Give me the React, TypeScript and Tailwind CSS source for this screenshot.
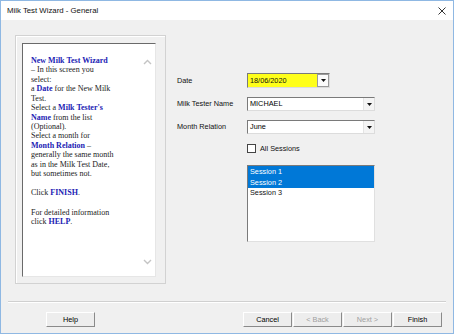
import React from "react";

const B = ({ children }: { children: React.ReactNode }) => (
  <span className="font-bold text-[#1c1cb4]">{children}</span>
);

function Chevron({ up }: { up?: boolean }) {
  return (
    <svg width="9" height="6" viewBox="0 0 9 6">
      <path
        d={up ? "M1 5 L4.5 1.5 L8 5" : "M1 1 L4.5 4.5 L8 1"}
        fill="none"
        stroke="#c4c4c4"
        strokeWidth="1.4"
      />
    </svg>
  );
}

function Tri() {
  return (
    <svg width="5" height="3" viewBox="0 0 5 3">
      <path d="M0 0 L5 0 L2.5 3 Z" fill="#111" />
    </svg>
  );
}

function Combo({ value }: { value: string }) {
  return (
    <div className="w-[128px] h-[14px] flex bg-white border border-t-[#7a7a7a] border-l-[#7a7a7a] border-r-[#dcdcdc] border-b-[#dcdcdc]">
      <div className="flex-1 flex items-center pl-[2px] text-[7.3px] text-black leading-none">{value}</div>
      <div className="w-[11px] h-full flex items-center justify-center bg-[#f4f4f4] border-l border-[#e4e4e4]">
        <Tri />
      </div>
    </div>
  );
}

function Btn({ label, disabled }: { label: string; disabled?: boolean }) {
  return (
    <div
      className={`w-[49px] h-[15px] flex items-center justify-center bg-[#ededed] border border-t-white border-l-white border-r-[#8a8a8a] border-b-[#8a8a8a] text-[7.3px] leading-none ${
        disabled ? "text-[#a0a0a0]" : "text-black"
      }`}
    >
      {label}
    </div>
  );
}

export default function App() {
  const lines: React.ReactNode[] = [
    <B>New Milk Test Wizard</B>,
    <>– In this screen you</>,
    <>select:</>,
    <>a <B>Date</B> for the New Milk</>,
    <>Test.</>,
    <>Select a <B>Milk Tester's</B></>,
    <><B>Name</B> from the list</>,
    <>(Optional).</>,
    <>Select a month for</>,
    <><B>Month Relation</B> –</>,
    <>generally the same month</>,
    <>as in the Milk Test Date,</>,
    <>but sometimes not.</>,
  ];
  return (
    <div
      className="w-[454px] h-[334px] flex flex-col border border-[#8fb8e3] bg-[#f0f0f0] overflow-hidden"
      style={{ fontFamily: '"Liberation Sans", Arial, sans-serif' }}
    >
      {/* Title bar */}
      <div className="h-[19px] bg-white flex items-center justify-between pl-[6px] pr-[6px] shrink-0">
        <span className="text-[7.8px] text-[#111] leading-none">Milk Test Wizard - General</span>
        <svg width="8" height="8" viewBox="0 0 8 8" className="mr-[1px]">
          <path d="M0.5 0.5 L7.5 7.5 M7.5 0.5 L0.5 7.5" stroke="#333" strokeWidth="1" />
        </svg>
      </div>

      {/* Body */}
      <div className="flex-1 flex flex-col">
        <div className="flex pl-[14px] pt-[15px]">
          {/* Left help panel */}
          <div className="w-[151px] h-[249px] border border-[#d2d2d2] shadow-[inset_1px_1px_0_#ffffff] pl-[6px] pr-[9px] pt-[7px] pb-[6px]">
            <div className="w-full h-full bg-white border border-t-[#6a6a6a] border-l-[#6a6a6a] border-r-[#e6e6e6] border-b-[#e6e6e6] flex">
              <div
                className="flex-1 pl-[8px] pt-[12px] text-[8px] leading-[9.42px] text-[#222] whitespace-nowrap"
                style={{ fontFamily: '"Liberation Serif", "Times New Roman", serif' }}
              >
                {lines.map((l, i) => (
                  <div key={i}>{l}</div>
                ))}
                <div className="h-[10px]" />
                <div>
                  Click <B>FINISH</B>.
                </div>
                <div className="h-[10px]" />
                <div>For detailed information</div>
                <div>
                  click <B>HELP</B>.
                </div>
              </div>
              <div className="w-[13px] flex flex-col items-center justify-between pt-[15px] pb-[11px] pr-[2px]">
                <Chevron up />
                <Chevron />
              </div>
            </div>
          </div>

          {/* Right form */}
          <div className="flex flex-col pl-[11px] pt-[38px] text-[7.3px] text-[#111]">
            <div className="flex items-center h-[15px]">
              <div className="w-[70px] leading-none">Date</div>
              <div className="w-[83px] h-[15px] flex border border-t-[#7a7a7a] border-l-[#7a7a7a] border-r-[#dcdcdc] border-b-[#dcdcdc] bg-[#ffff1a]">
                <div className="flex-1 flex items-center pl-[2px] leading-none">18/06/2020</div>
                <div className="w-[12px] h-full flex items-center justify-center bg-[#fbfbfb] border border-[#9a9a9a]">
                  <Tri />
                </div>
              </div>
            </div>
            <div className="flex items-center h-[14px] mt-[9px]">
              <div className="w-[70px] leading-none">Milk Tester Name</div>
              <Combo value="MICHAEL" />
            </div>
            <div className="flex items-center h-[14px] mt-[9px]">
              <div className="w-[70px] leading-none">Month Relation</div>
              <Combo value="June" />
            </div>
            <div className="flex items-center h-[9px] mt-[10px] pl-[70px]">
              <div className="w-[9px] h-[9px] bg-white border border-[#444]" />
              <div className="ml-[4px] leading-none">All Sessions</div>
            </div>
            <div className="ml-[70px] mt-[12px] w-[128px] h-[77px] bg-white border border-t-[#7a7a7a] border-l-[#7a7a7a] border-r-[#e0e0e0] border-b-[#e0e0e0] flex flex-col">
              <div className="h-[11px] bg-[#0078d7] text-white flex items-center pl-[2px] leading-none">Session 1</div>
              <div className="h-[10.5px] bg-[#0078d7] text-white flex items-center pl-[2px] leading-none">Session 2</div>
              <div className="h-[10.5px] flex items-center pl-[2px] leading-none">Session 3</div>
            </div>
          </div>
        </div>

        {/* Separator */}
        <div className="mt-[17px] mx-[7px] h-[2px] border-t border-[#d0d0d0] border-b border-b-white" />

        {/* Buttons */}
        <div className="flex items-center mt-[9px] pl-[45px] pr-[11px]">
          <Btn label="Help" />
          <div className="flex-1" />
          <div className="flex gap-[1px]">
            <Btn label="Cancel" />
            <Btn label="< Back" disabled />
            <Btn label="Next >" disabled />
            <Btn label="Finish" />
          </div>
        </div>
      </div>
    </div>
  );
}
